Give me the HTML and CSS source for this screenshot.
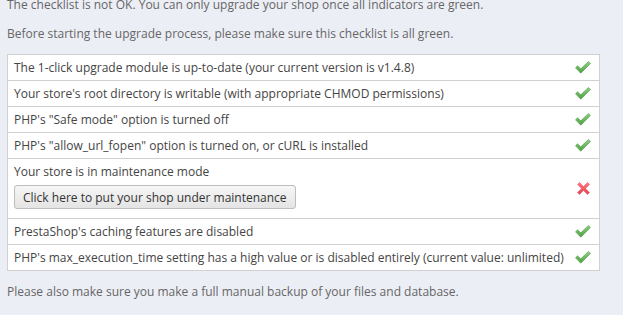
FILE: index.html
```html
<!DOCTYPE html>
<html>
<head>
<meta charset="utf-8">
<link rel="stylesheet" href="styles.css">
</head>
<body>
<div class="page">
  <p class="intro first">The checklist is not OK. You can only upgrade your shop once all indicators are green.</p>
  <p class="intro">Before starting the upgrade process, please make sure this checklist is all green.</p>
  <table class="checklist">
    <tr>
      <td class="label">The 1-click upgrade module is up-to-date (your current version is v1.4.8)</td>
      <td class="status"><svg class="ok" viewBox="0 0 16 13"><defs><linearGradient id="g1" x1="0" y1="0" x2="0" y2="1"><stop offset="0" stop-color="#8fd27f"/><stop offset="1" stop-color="#4e9f45"/></linearGradient></defs><path d="M0.5 6.8 L2.6 4.8 L5.8 7.8 L13.4 0.5 L15.5 2.5 L5.8 12.2 Z" fill="url(#g1)" stroke="#4f9a47" stroke-width="0.6" stroke-linejoin="round"/></svg></td>
    </tr>
    <tr>
      <td class="label">Your store's root directory is writable (with appropriate CHMOD permissions)</td>
      <td class="status"><svg class="ok" viewBox="0 0 16 13"><path d="M0.5 6.8 L2.6 4.8 L5.8 7.8 L13.4 0.5 L15.5 2.5 L5.8 12.2 Z" fill="url(#g1)" stroke="#4f9a47" stroke-width="0.6" stroke-linejoin="round"/></svg></td>
    </tr>
    <tr>
      <td class="label">PHP's "Safe mode" option is turned off</td>
      <td class="status"><svg class="ok" viewBox="0 0 16 13"><path d="M0.5 6.8 L2.6 4.8 L5.8 7.8 L13.4 0.5 L15.5 2.5 L5.8 12.2 Z" fill="url(#g1)" stroke="#4f9a47" stroke-width="0.6" stroke-linejoin="round"/></svg></td>
    </tr>
    <tr>
      <td class="label">PHP's "allow_url_fopen" option is turned on, or cURL is installed</td>
      <td class="status"><svg class="ok" viewBox="0 0 16 13"><path d="M0.5 6.8 L2.6 4.8 L5.8 7.8 L13.4 0.5 L15.5 2.5 L5.8 12.2 Z" fill="url(#g1)" stroke="#4f9a47" stroke-width="0.6" stroke-linejoin="round"/></svg></td>
    </tr>
    <tr>
      <td class="label">
        <div>Your store is in maintenance mode</div>
        <button class="btn">Click here to put your shop under maintenance</button>
      </td>
      <td class="status"><svg class="ko" viewBox="0 0 13 13"><defs><linearGradient id="g2" x1="0" y1="0" x2="0" y2="1"><stop offset="0" stop-color="#ff7a84"/><stop offset="1" stop-color="#e6404c"/></linearGradient></defs><path d="M2.5 0.5 L6.5 4.5 L10.5 0.5 L12.5 2.5 L8.5 6.5 L12.5 10.5 L10.5 12.5 L6.5 8.5 L2.5 12.5 L0.5 10.5 L4.5 6.5 L0.5 2.5 Z" fill="url(#g2)" stroke="#e5525c" stroke-width="0.5" stroke-linejoin="round"/></svg></td>
    </tr>
    <tr>
      <td class="label">PrestaShop's caching features are disabled</td>
      <td class="status"><svg class="ok" viewBox="0 0 16 13"><path d="M0.5 6.8 L2.6 4.8 L5.8 7.8 L13.4 0.5 L15.5 2.5 L5.8 12.2 Z" fill="url(#g1)" stroke="#4f9a47" stroke-width="0.6" stroke-linejoin="round"/></svg></td>
    </tr>
    <tr>
      <td class="label">PHP's max_execution_time setting has a high value or is disabled entirely (current value: unlimited)</td>
      <td class="status"><svg class="ok" viewBox="0 0 16 13"><path d="M0.5 6.8 L2.6 4.8 L5.8 7.8 L13.4 0.5 L15.5 2.5 L5.8 12.2 Z" fill="url(#g1)" stroke="#4f9a47" stroke-width="0.6" stroke-linejoin="round"/></svg></td>
    </tr>
  </table>
  <p class="intro">Please also make sure you make a full manual backup of your files and database.</p>
</div>
</body>
</html>
```

FILE: styles.css
```css
html, body {
  margin: 0;
  padding: 0;
  background: #eceef5;
}
body {
  font-family: "Open Sans", "Liberation Sans", sans-serif;
  font-size: 12px;
  line-height: 18px;
  color: #666;
}
.page {
  padding: 0 7px;
}
.intro {
  margin: 0 0 11px 0;
}
.intro.first {
  margin-top: -4px;
}
.checklist {
  width: 593px;
  border-collapse: collapse;
  background: #fff;
  border: 1px solid #d0d0d0;
  margin-bottom: 12px;
  color: #444;
}
.checklist td {
  border-top: 1px solid #d0d0d0;
  padding: 4px 0 3px 6px;
  vertical-align: middle;
}
.checklist td.status {
  width: 24px;
  padding: 0 8px 0 0;
  text-align: right;
}
.checklist td.label {
  white-space: nowrap;
}
.btn {
  display: block;
  margin: 4px 0 6px 0;
  height: 24px;
  padding: 0 8px;
  font-family: inherit;
  font-size: 12px;
  color: #333;
  background: linear-gradient(#f6f6f6, #e4e4e4);
  border: 1px solid #bdbdbd;
  border-radius: 3px;
}
.ok {
  width: 16px;
  height: 13px;
  display: block;
  margin-left: auto;
}
.ko {
  width: 13px;
  height: 13px;
  display: block;
  margin-left: auto;
  margin-right: 1px;
}
```
